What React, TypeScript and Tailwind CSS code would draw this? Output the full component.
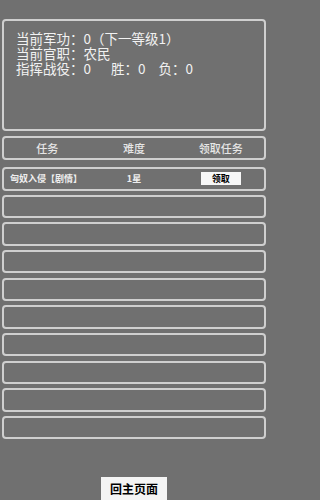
import React from "react";

const FONT = { fontFamily: '"Noto Sans CJK SC", "Noto Sans", sans-serif' };

export default function App() {
  const emptyRows = Array.from({ length: 9 });

  return (
    <div className="w-full min-h-screen h-[500px] overflow-hidden bg-[#707070]" style={FONT}>
      <div className="ml-[2px] w-[264px] pt-[19px] flex flex-col">
        {/* 状态面板 */}
        <div className="h-[112px] border-2 border-[#cfcfcf] rounded-[4px] pl-[12px] pt-[10px] text-[13.5px] leading-[15px] text-[#f2f2f2]">
          <div className="whitespace-nowrap">当前军功：0（下一等级1）</div>
          <div className="whitespace-nowrap">当前官职：农民</div>
          <div className="flex whitespace-nowrap">
            <span>指挥战役：0</span>
            <span className="ml-[20px]">胜：0</span>
            <span className="ml-[13px]">负：0</span>
          </div>
        </div>

        {/* 表头 */}
        <div className="mt-[5px] h-[24px] border-2 border-[#cfcfcf] rounded-[4px] grid grid-cols-3 items-center text-[11px] text-[#e6e6e6] font-medium">
          <div className="text-center">任务</div>
          <div className="text-center">难度</div>
          <div className="text-center">领取任务</div>
        </div>

        {/* 任务列表 */}
        <div className="mt-[7px] flex flex-col gap-[4.17px]">
          <div className="h-[23.5px] border-2 border-[#cfcfcf] rounded-[4px] grid grid-cols-3 items-center text-[9px] text-[#eeeeee] font-bold">
            <div className="pl-[6px] whitespace-nowrap">匈奴入侵【剧情】</div>
            <div className="text-center">1星</div>
            <div className="flex justify-center">
              <button className="w-[40px] h-[13px] bg-[#f7f7f7] text-black text-[9px] leading-[13px] font-bold">
                领取
              </button>
            </div>
          </div>
          {emptyRows.map((_, i) => (
            <div key={i} className="h-[23.5px] border-2 border-[#cfcfcf] rounded-[4px]" />
          ))}
        </div>

        {/* 返回按钮 */}
        <div className="mt-[38px] flex justify-center">
          <button className="w-[66px] h-[24px] bg-[#f4f4f4] text-black text-[12px] font-bold leading-[24px]">
            回主页面
          </button>
        </div>
      </div>
    </div>
  );
}
